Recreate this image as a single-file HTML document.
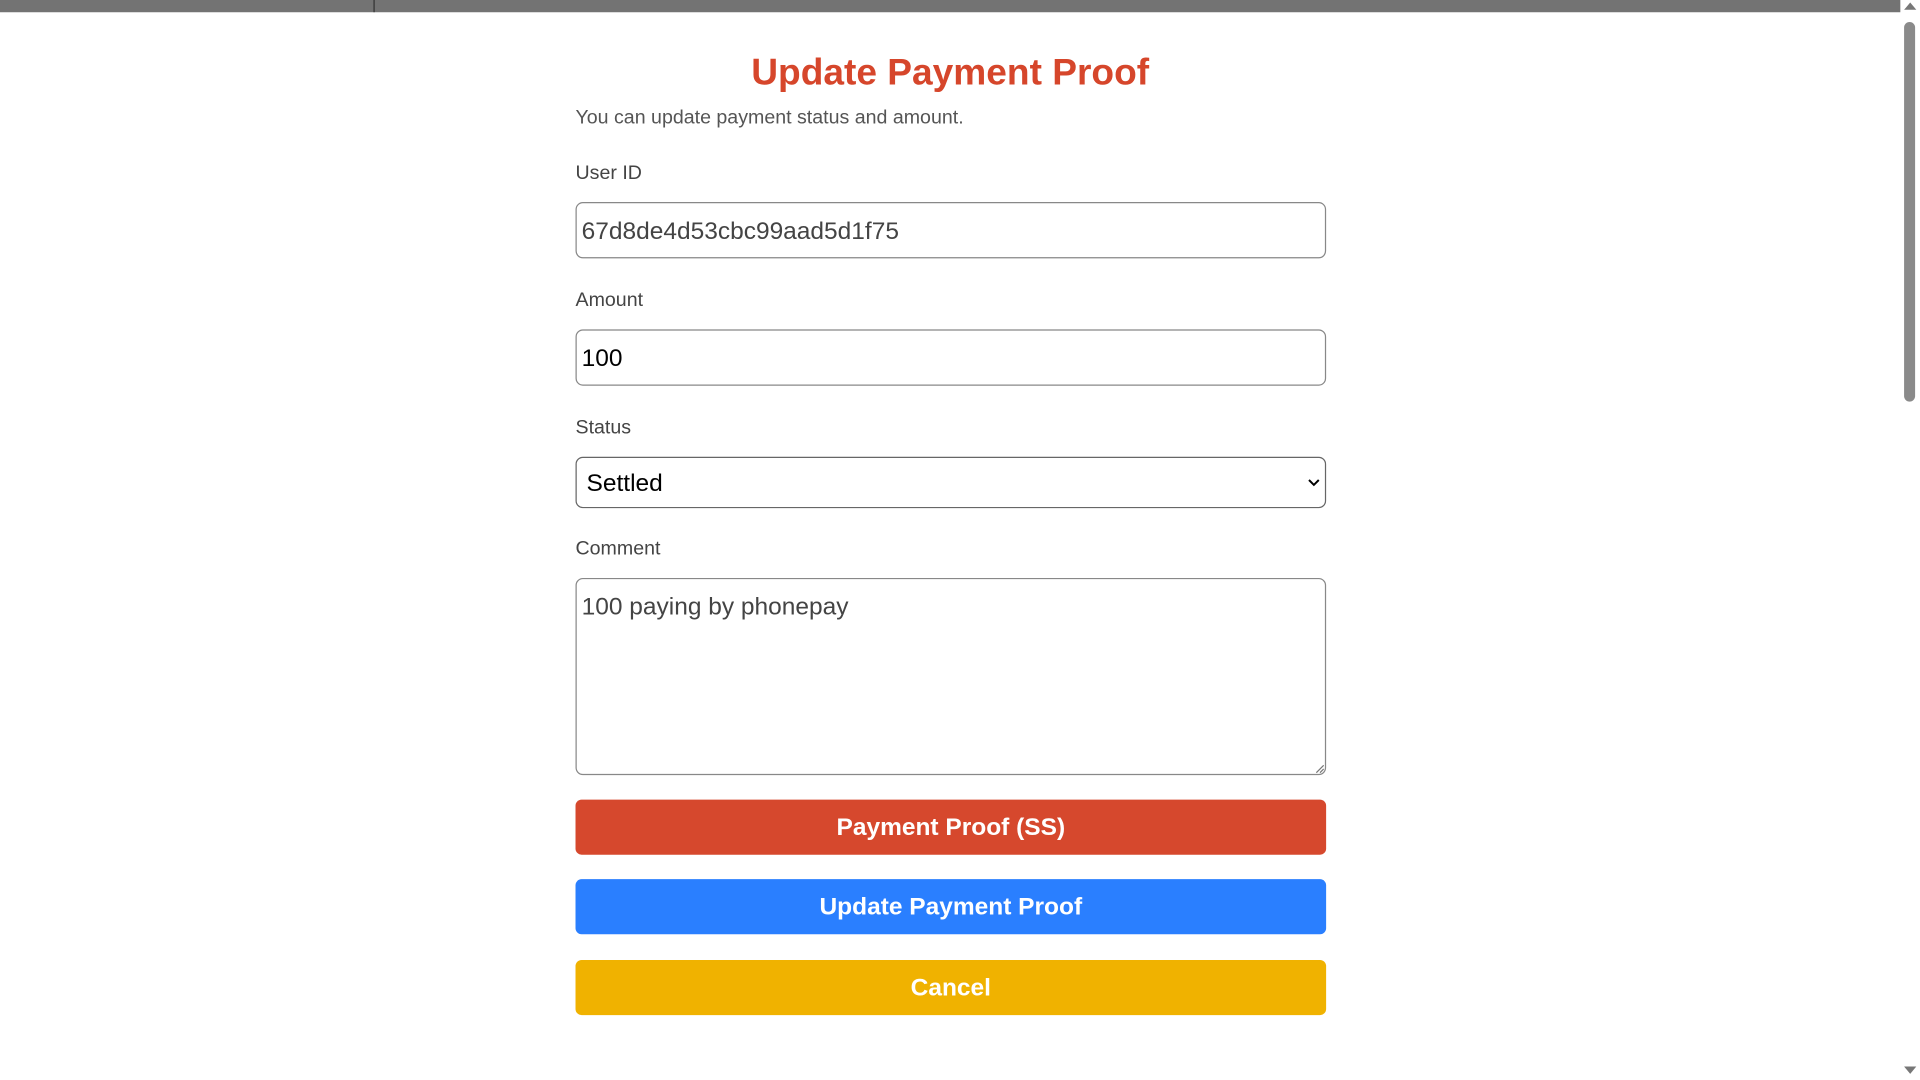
<!DOCTYPE html>
<html><head><meta charset="utf-8"><style>
html,body{margin:0;padding:0;overflow:hidden;background:#fff;width:1920px;height:1080px}
#w{position:absolute;left:0;top:0;width:1568px;height:882px;transform:scale(1.22449);transform-origin:0 0;font-family:"Liberation Sans",Arial,sans-serif}
.a{position:absolute}
.lbl{position:absolute;left:470px;font-size:16px;color:#444}
.box{position:absolute;left:470px;width:613px;border:1px solid #888;border-radius:6px;background:#fff;box-sizing:border-box}
.txt{position:absolute;left:4px;font-size:20px}
.btn{position:absolute;left:470px;width:613px;height:45px;border-radius:5px;color:#fff;font-weight:bold;font-size:20px;text-align:center;line-height:46px}
</style></head><body><div id="w">
<div class="a" style="left:0;top:0;width:1552px;height:10px;background:#737373"></div>
<div class="a" style="left:305px;top:0;width:1px;height:10px;background:#333"></div>
<div class="a" style="left:1552px;top:0;width:16px;height:882px;background:#fff"></div>
<div class="a" style="left:1555px;top:18px;width:9px;height:310px;background:#8a8a8a;border-radius:5px"></div>
<div class="a" style="left:1555px;top:2px;width:0;height:0;border-left:5px solid transparent;border-right:5px solid transparent;border-bottom:6px solid #777"></div>
<div class="a" style="left:1555px;top:871px;width:0;height:0;border-left:5px solid transparent;border-right:5px solid transparent;border-top:6px solid #777"></div>
<div class="a" style="left:0;width:1552px;top:43px;text-align:center;font-size:30.3px;font-weight:bold;color:#d6462b">Update Payment Proof</div>
<div class="lbl" style="top:88px;color:#555">You can update payment status and amount.</div>
<div class="lbl" style="top:133px">User ID</div>
<div class="box" style="top:165px;height:46px"><div class="txt" style="top:12px;color:#444">67d8de4d53cbc99aad5d1f75</div></div>
<div class="lbl" style="top:237px">Amount</div>
<div class="box" style="top:269px;height:46px"><div class="txt" style="top:12px;color:#000">100</div></div>
<div class="lbl" style="top:341px">Status</div>
<div class="box" style="top:373px;height:42px;border-color:#666"><div class="txt" style="left:8px;top:10px;color:#000">Settled</div>
<svg class="a" style="left:597px;top:16px" width="10" height="8" viewBox="0 0 10 8"><path d="M1 2 L5 6 L9 2" stroke="#000" stroke-width="1.6" fill="none"/></svg></div>
<div class="lbl" style="top:440px">Comment</div>
<div class="box" style="top:472px;height:161px"><div class="txt" style="top:12px;color:#444">100 paying by phonepay</div>
<svg class="a" style="left:603px;top:151px" width="8" height="8"><path d="M1 7 L7 1 M4 7 L7 4" stroke="#777" stroke-width="1"/></svg></div>
<div class="btn" style="top:653px;background:#d6482d">Payment Proof (SS)</div>
<div class="btn" style="top:718px;background:#2a7fff">Update Payment Proof</div>
<div class="btn" style="top:784px;background:#f0b200">Cancel</div>
</div></body></html>
